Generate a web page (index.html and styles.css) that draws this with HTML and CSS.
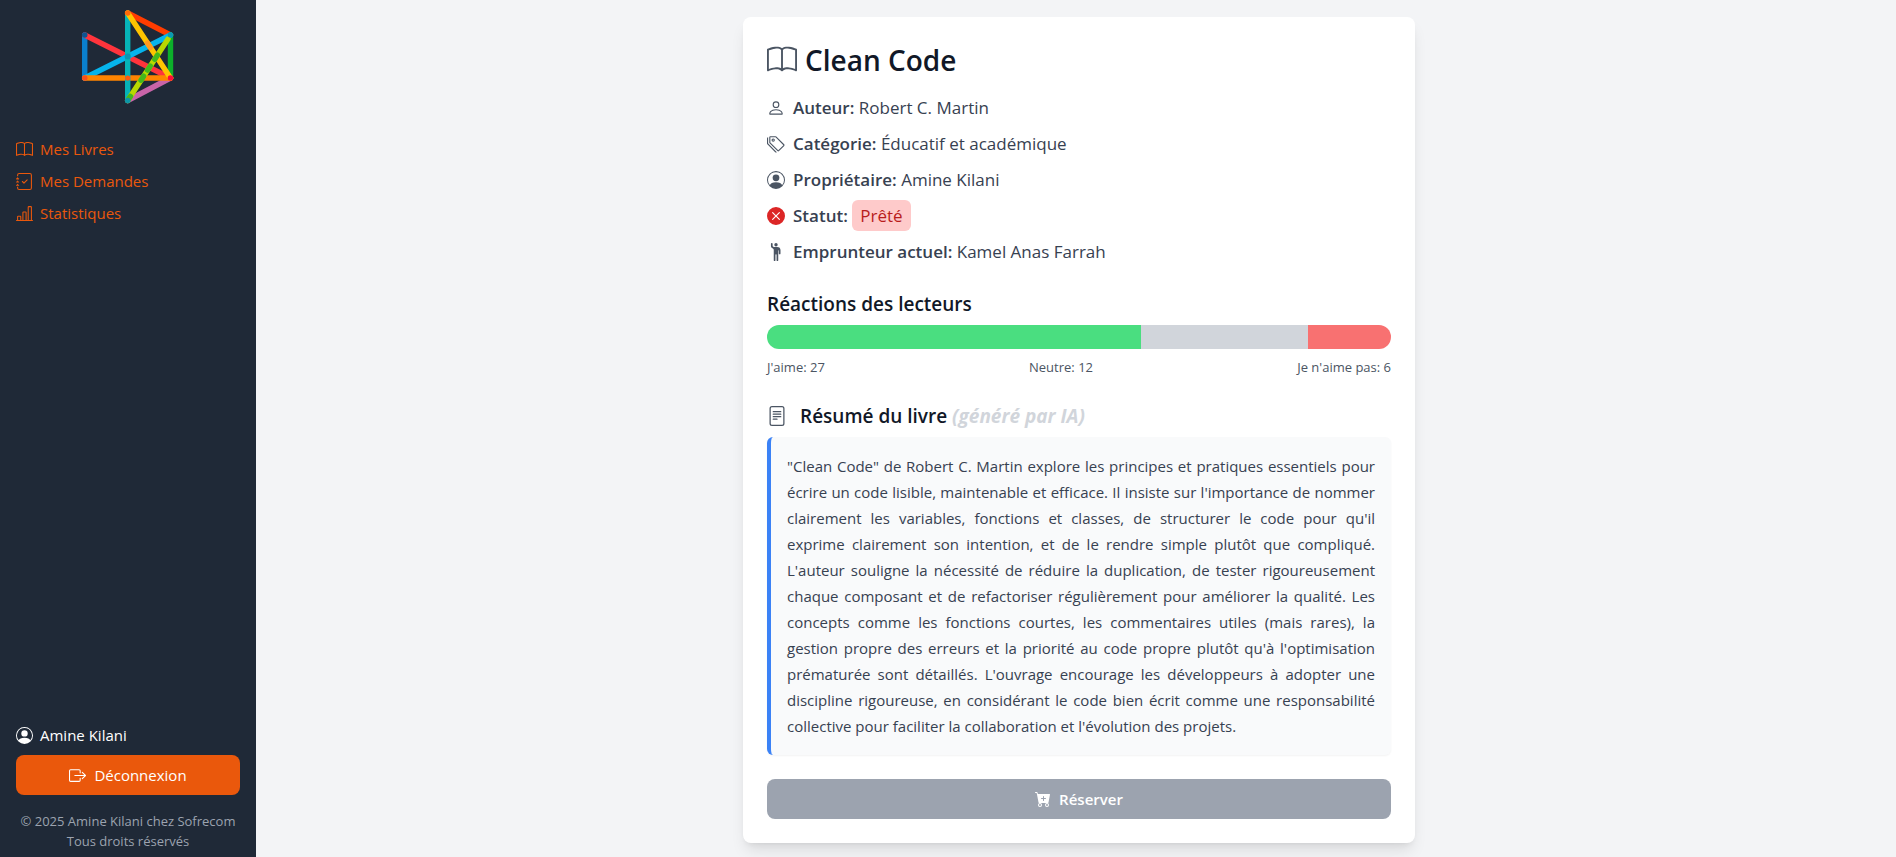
FILE: index.html
```html
<!DOCTYPE html>
<html lang="fr">
<head>
<meta charset="utf-8">
<meta name="viewport" content="width=device-width, initial-scale=1">
<title>Clean Code</title>
<link rel="stylesheet" href="styles.css">
</head>
<body>
<div class="app">
  <aside class="sidebar">
    <svg class="logo" viewBox="0 0 96 96" fill="none" stroke-width="5.400" stroke-linecap="round" role="img" aria-label="Logo">
      <path stroke="#ff3c00" d="M47.7 5 90.5 27"/>
      <path stroke="#0cb02a" d="M90.5 27V70"/>
      <path stroke="#c864a8" d="M90.5 70 47.7 92.5"/>
      <path stroke="#0a7fcc" d="M4.7 27V70"/>
      <path stroke="#ff343c" d="M4.7 27 90.5 70"/>
      <path stroke="#06b4ec" d="M4.7 70 90.5 27"/>
      <path stroke="#ff8400" d="M4.7 70H90.5"/>
      <path stroke="#06b4b8" d="M47.7 5V92.5"/>
      <path stroke="#b8d800" d="M47.7 92.5 88 31"/>
      <path stroke="#ffc400" d="M47.7 5 90.5 70"/>
      <path stroke="#ff9a20" d="M67.5 35.1 70.3 39.4"/>
      <path stroke="#44b81c" d="M74.8 51.2 77.4 47.2M67.6 62.1 70.2 58.1M61 72.2 63.6 68.2M48.8 90.8 50.4 88.4"/>
      <g stroke="none">
        <circle cx="47.7" cy="5" r="2.8" fill="#ff6a08"/>
        <circle cx="90.5" cy="27" r="2.8" fill="#0c9ab0"/>
        <circle cx="90.5" cy="70" r="2.8" fill="#ff083c"/>
        <circle cx="47.7" cy="92.5" r="2.8" fill="#0c96a8"/>
        <circle cx="4.7" cy="27" r="2.8" fill="#0c5490"/>
        <circle cx="4.7" cy="70" r="2.8" fill="#f8501c"/>
        <circle cx="47.7" cy="48.5" r="3" fill="#0c96b0"/>
        <circle cx="47.7" cy="70" r="2.6" fill="#ff5a10"/>
      </g>
    </svg>
    <nav class="nav">
      <a class="nav-link" href="#livres"><svg class="icon" viewBox="0 0 16 16"><use href="#i-book"/></svg>Mes Livres</a>
      <a class="nav-link" href="#demandes"><svg class="icon" viewBox="0 0 16 16"><path d="M10.854 6.146a.5.5 0 0 1 0 .708l-3 3a.5.5 0 0 1-.708 0l-1.500-1.500a.5.5 0 1 1 .708-.708L7.500 8.793l2.646-2.647a.5.5 0 0 1 .708 0"/><path d="M3 0h10a2 2 0 0 1 2 2v12a2 2 0 0 1-2 2H3a2 2 0 0 1-2-2v-1h1v1a1 1 0 0 0 1 1h10a1 1 0 0 0 1-1V2a1 1 0 0 0-1-1H3a1 1 0 0 0-1 1v1H1V2a2 2 0 0 1 2-2"/><path d="M1 5v-.5a.5.5 0 0 1 1 0V5h.5a.5.5 0 0 1 0 1h-2a.5.5 0 0 1 0-1zm0 3v-.5a.5.5 0 0 1 1 0V8h.5a.5.5 0 0 1 0 1h-2a.5.5 0 0 1 0-1zm0 3v-.5a.5.5 0 0 1 1 0v.5h.5a.5.5 0 0 1 0 1h-2a.5.5 0 0 1 0-1z"/></svg>Mes Demandes</a>
      <a class="nav-link" href="#statistiques"><svg class="icon" viewBox="0 0 16 16"><path d="M11 2a1 1 0 0 1 1-1h2a1 1 0 0 1 1 1v12h.5a.5.5 0 0 1 0 1H.5a.5.5 0 0 1 0-1H1v-3a1 1 0 0 1 1-1h2a1 1 0 0 1 1 1v3h1V7a1 1 0 0 1 1-1h2a1 1 0 0 1 1 1v7h1zm1 12h2V2h-2zm-3 0V7H7v7zm-5 0v-3H2v3z"/></svg>Statistiques</a>
    </nav>
    <div class="account">
      <div class="user"><svg class="icon" viewBox="0 0 16 16"><use href="#i-person-circle"/></svg>Amine Kilani</div>
      <button class="button button-logout" type="button"><svg class="icon" viewBox="0 0 16 16"><path d="M10 12.500a.5.5 0 0 1-.5.5h-8a.5.5 0 0 1-.5-.5v-9a.5.5 0 0 1 .5-.5h8a.5.5 0 0 1 .5.5v2a.5.5 0 0 0 1 0v-2A1.500 1.500 0 0 0 9.500 2h-8A1.500 1.500 0 0 0 0 3.500v9A1.500 1.500 0 0 0 1.500 14h8a1.500 1.500 0 0 0 1.500-1.500v-2a.5.5 0 0 0-1 0z"/><path d="M15.854 8.354a.5.5 0 0 0 0-.708l-3-3a.5.5 0 0 0-.708.708L14.293 7.500H5.500a.5.5 0 0 0 0 1h8.793l-2.147 2.146a.5.5 0 0 0 .708.708z"/></svg>Déconnexion</button>
      <p class="copyright">© 2025 Amine Kilani chez Sofrecom<br>Tous droits réservés</p>
    </div>
  </aside>

  <main class="main">
    <article class="card">
      <h1 class="title"><svg class="icon icon-muted" viewBox="0 0 16 16"><use href="#i-book"/></svg>Clean Code</h1>
      <ul class="facts">
        <li class="fact"><svg class="icon icon-muted" viewBox="0 0 16 16"><path d="M8 8a3 3 0 1 0 0-6 3 3 0 0 0 0 6m2-3a2 2 0 1 1-4 0 2 2 0 0 1 4 0m4 8c0 1-1 1-1 1H3s-1 0-1-1 1-4 6-4 6 3 6 4m-1-.004c-.001-.246-.154-.986-.832-1.664C11.516 10.680 10.289 10 8 10s-3.516.68-4.168 1.332c-.678.678-.83 1.418-.832 1.664z"/></svg><span><strong>Auteur:</strong> Robert C. Martin</span></li>
        <li class="fact"><svg class="icon icon-muted" viewBox="0 0 16 16"><path d="M3 2v4.586l7 7L14.586 9l-7-7zM2 2a1 1 0 0 1 1-1h4.586a1 1 0 0 1 .707.293l7 7a1 1 0 0 1 0 1.414l-4.586 4.586a1 1 0 0 1-1.414 0l-7-7A1 1 0 0 1 2 6.586z"/><path d="M5.500 5a.5.5 0 1 1 0-1 .5.5 0 0 1 0 1m0 1a1.500 1.500 0 1 0 0-3 1.500 1.500 0 0 0 0 3M1 7.086a1 1 0 0 0 .293.707L8.750 15.250l-.043.043a1 1 0 0 1-1.414 0l-7-7A1 1 0 0 1 0 7.586V3a1 1 0 0 1 1-1z"/></svg><span><strong>Catégorie:</strong> Éducatif et académique</span></li>
        <li class="fact"><svg class="icon icon-muted" viewBox="0 0 16 16"><use href="#i-person-circle"/></svg><span><strong>Propriétaire:</strong> Amine Kilani</span></li>
        <li class="fact"><svg class="icon icon-danger" viewBox="0 0 16 16"><path d="M16 8A8 8 0 1 1 0 8a8 8 0 0 1 16 0M5.354 4.646a.5.5 0 1 0-.708.708L7.293 8l-2.647 2.646a.5.5 0 0 0 .708.708L8 8.707l2.646 2.647a.5.5 0 0 0 .708-.708L8.707 8l2.647-2.646a.5.5 0 0 0-.708-.708L8 7.293z"/></svg><span><strong>Statut:</strong> <span class="badge">Prêté</span></span></li>
        <li class="fact"><svg class="icon icon-muted" viewBox="0 0 16 16"><path d="M6 6.207v9.043a.75.75 0 0 0 1.500 0V10.500a.5.5 0 0 1 1 0v4.750a.75.75 0 0 0 1.500 0v-8.500a.25.25 0 1 1 .5 0v2.500a.75.75 0 0 0 1.500 0V6.500a3 3 0 0 0-3-3H6.236a1 1 0 0 1-.447-.106l-.33-.165A.83.83 0 0 1 5 2.488V.75a.75.75 0 0 0-1.500 0v2.083c0 .715.404 1.370 1.044 1.689L5.500 5c.32.32.5.754.5 1.207"/><path d="M8 3a1.500 1.500 0 1 0 0-3 1.500 1.500 0 0 0 0 3"/></svg><span><strong>Emprunteur actuel:</strong> Kamel Anas Farrah</span></li>
      </ul>

      <section class="section">
        <h2 class="heading">Réactions des lecteurs</h2>
        <div class="bar">
          <div class="bar-like" style="width:60%"></div>
          <div class="bar-neutral" style="width:26.667%"></div>
          <div class="bar-dislike" style="width:13.333%"></div>
        </div>
        <div class="legend"><span>J'aime: 27</span><span>Neutre: 12</span><span>Je n'aime pas: 6</span></div>
      </section>

      <section class="section">
        <h2 class="heading heading-icon"><svg class="icon icon-muted" viewBox="0 0 16 16"><path d="M5 4a.5.5 0 0 0 0 1h6a.5.5 0 0 0 0-1zm-.5 2.500A.5.5 0 0 1 5 6h6a.5.5 0 0 1 0 1H5a.5.5 0 0 1-.5-.5M5 8a.5.5 0 0 0 0 1h6a.5.5 0 0 0 0-1zm0 2a.5.5 0 0 0 0 1h3a.5.5 0 0 0 0-1z"/><path d="M2 2a2 2 0 0 1 2-2h8a2 2 0 0 1 2 2v12a2 2 0 0 1-2 2H4a2 2 0 0 1-2-2zm10-1H4a1 1 0 0 0-1 1v12a1 1 0 0 0 1 1h8a1 1 0 0 0 1-1V2a1 1 0 0 0-1-1"/></svg><span>Résumé du livre <em class="hint">(généré par IA)</em></span></h2>
        <p class="summary">"Clean Code" de Robert C. Martin explore les principes et pratiques essentiels pour écrire un code lisible, maintenable et efficace. Il insiste sur l'importance de nommer clairement les variables, fonctions et classes, de structurer le code pour qu'il exprime clairement son intention, et de le rendre simple plutôt que compliqué. L'auteur souligne la nécessité de réduire la duplication, de tester rigoureusement chaque composant et de refactoriser régulièrement pour améliorer la qualité. Les concepts comme les fonctions courtes, les commentaires utiles (mais rares), la gestion propre des erreurs et la priorité au code propre plutôt qu'à l'optimisation prématurée sont détaillés. L'ouvrage encourage les développeurs à adopter une discipline rigoureuse, en considérant le code bien écrit comme une responsabilité collective pour faciliter la collaboration et l'évolution des projets.</p>
      </section>

      <button class="button button-reserve" type="button" disabled><svg class="icon" viewBox="0 0 16 16"><path d="M.5 1a.5.5 0 0 0 0 1h1.110l.401 1.607 1.498 7.985A.5.5 0 0 0 4 12h1a2 2 0 1 0 0 4 2 2 0 0 0 0-4h7a2 2 0 1 0 0 4 2 2 0 0 0 0-4h1a.5.5 0 0 0 .491-.408l1.500-8A.5.5 0 0 0 14.500 3H2.890l-.405-1.621A.5.5 0 0 0 2 1zM6 14a1 1 0 1 1-2 0 1 1 0 0 1 2 0m7 0a1 1 0 1 1-2 0 1 1 0 0 1 2 0M9 5.500V7h1.500a.5.5 0 0 1 0 1H9v1.500a.5.5 0 0 1-1 0V8H6.500a.5.5 0 0 1 0-1H8V5.500a.5.5 0 0 1 1 0"/></svg>Réserver</button>
    </article>
  </main>
</div>

<svg class="sprite" aria-hidden="true">
  <symbol id="i-book" viewBox="0 0 16 16"><path d="M1 2.828c.885-.37 2.154-.769 3.388-.893 1.330-.134 2.458.063 3.112.752v9.746c-.935-.53-2.120-.603-3.213-.493-1.180.12-2.370.461-3.287.811zm7.500-.141c.654-.689 1.782-.886 3.112-.752 1.234.124 2.503.523 3.388.893v9.923c-.918-.35-2.107-.692-3.287-.81-1.094-.111-2.278-.039-3.213.492zM8 1.783C7.015.936 5.587.81 4.287.94c-1.514.153-3.042.672-3.994 1.105A.5.5 0 0 0 0 2.500v11a.5.5 0 0 0 .707.455c.882-.4 2.303-.881 3.680-1.020 1.409-.142 2.590.087 3.223.877a.5.5 0 0 0 .78 0c.633-.79 1.814-1.019 3.222-.877 1.378.139 2.800.62 3.681 1.020A.5.5 0 0 0 16 13.500v-11a.5.5 0 0 0-.293-.455c-.952-.433-2.480-.952-3.994-1.105C10.413.809 8.985.936 8 1.783"/></symbol>
  <symbol id="i-person-circle" viewBox="0 0 16 16"><path d="M11 6a3 3 0 1 1-6 0 3 3 0 0 1 6 0"/><path fill-rule="evenodd" d="M0 8a8 8 0 1 1 16 0A8 8 0 0 1 0 8m8-7a7 7 0 0 0-5.468 11.370C3.242 11.226 4.805 10 8 10s4.757 1.225 5.468 2.370A7 7 0 0 0 8 1"/></symbol>
</svg>
</body>
</html>
```

FILE: styles.css
```css
*,
*::before,
*::after {
  box-sizing: border-box;
}

body,
h1,
h2,
p,
ul {
  margin: 0;
  padding: 0;
}

body {
  background: #f3f4f6;
  color: #374151;
  font-family: "Open Sans", "Noto Sans", sans-serif;
  font-size: 15px;
  line-height: 24px;
}

.app {
  display: flex;
  min-height: 100vh;
}

.icon {
  flex: none;
  width: 16px;
  height: 16px;
  fill: currentColor;
}

.icon-muted {
  color: #4b5563;
}

.icon-danger {
  color: #dc2626;
}

.sprite {
  display: none;
}

/* Sidebar */

.sidebar {
  display: flex;
  flex: none;
  flex-direction: column;
  width: 256px;
  padding: 8px 16px 6px;
  background: #1f2937;
}

.sidebar .icon {
  width: 17px;
  height: 17px;
}

.logo {
  width: 96px;
  height: 96px;
  margin: 0 auto 33px;
}

.nav {
  display: flex;
  flex-direction: column;
  gap: 8px;
}

.nav-link,
.user {
  display: flex;
  align-items: center;
  gap: 7px;
}

.nav-link {
  color: #ea580c;
  text-decoration: none;
}

.account {
  margin-top: auto;
}

.user {
  margin-bottom: 8px;
  color: #fff;
}

.button {
  display: flex;
  align-items: center;
  justify-content: center;
  gap: 8px;
  width: 100%;
  padding: 8px 16px;
  border: 0;
  border-radius: 8px;
  color: #fff;
  font: inherit;
}

.button-logout {
  background: #ea580c;
  cursor: pointer;
}

.copyright {
  margin-top: 16px;
  color: #9ca3af;
  font-size: 13px;
  line-height: 20px;
  text-align: center;
  white-space: nowrap;
}

/* Book details */

.main {
  flex: 1;
  min-width: 0;
  padding: 17px 0 14px 6px;
}

.card {
  max-width: 672px;
  margin: 0 auto;
  padding: 24px;
  border-radius: 8px;
  background: #fff;
  box-shadow: 0 10px 15px -3px rgb(0 0 0 / 10%), 0 4px 6px -4px rgb(0 0 0 / 10%);
}

.title {
  display: flex;
  align-items: center;
  gap: 8px;
  margin-bottom: 14px;
  color: #111827;
  font-size: 28px;
  font-weight: 600;
  line-height: 38px;
}

.title .icon {
  width: 30px;
  height: 30px;
}

.facts {
  display: flex;
  flex-direction: column;
  gap: 6px;
  list-style: none;
  font-size: 17px;
  line-height: 30px;
}

.fact {
  display: flex;
  align-items: center;
  gap: 8px;
}

.fact .icon {
  width: 18px;
  height: 18px;
}

.fact strong {
  font-weight: 600;
}

.badge {
  padding: 4px 8px;
  border-radius: 6px;
  background: #fecaca;
  color: #b91c1c;
}

.section {
  margin-top: 22px;
}

.heading {
  margin-bottom: 6px;
  color: #111827;
  font-size: 19px;
  font-weight: 600;
  line-height: 30px;
}

.heading-icon {
  display: flex;
  align-items: center;
  gap: 13px;
}

.heading .icon {
  width: 20px;
  height: 20px;
}

.hint {
  color: #d1d5db;
  font-weight: 700;
}

.bar {
  display: flex;
  height: 24px;
  overflow: hidden;
  border-radius: 12px;
}

.bar-like {
  background: #4ade80;
}

.bar-neutral {
  background: #d1d5db;
}

.bar-dislike {
  background: #f87171;
}

.legend {
  display: flex;
  justify-content: space-between;
  margin-top: 6px;
  color: #4b5563;
  font-size: 13px;
  line-height: 24px;
}

.summary {
  padding: 16px;
  border-left: 4px solid #3b82f6;
  border-radius: 6px;
  background: #f9fafb;
  box-shadow: 0 1px 2px rgb(0 0 0 / 5%);
  line-height: 26px;
  text-align: justify;
}

.button-reserve {
  margin-top: 24px;
  background: #9ca3af;
  font-weight: 600;
}
```
